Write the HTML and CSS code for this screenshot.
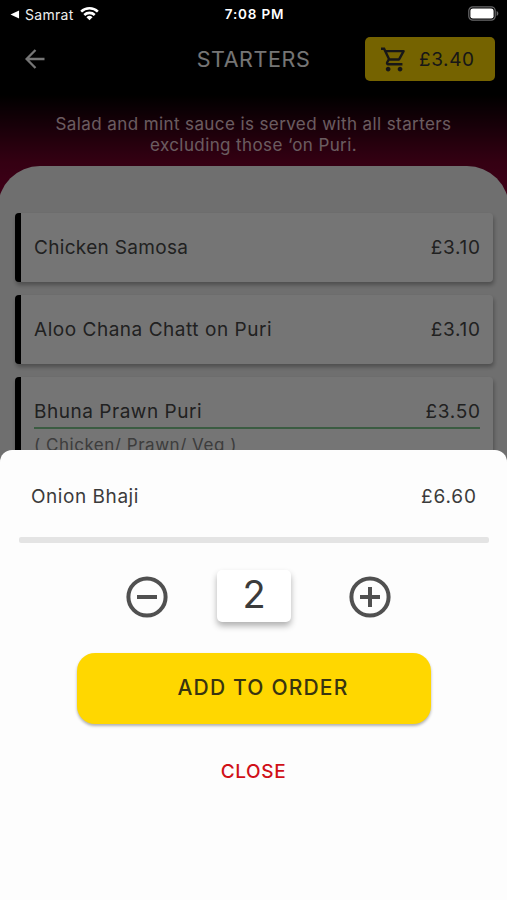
FILE: index.html
```html
<!DOCTYPE html>
<html lang="en">
<head>
<meta charset="utf-8">
<title>Starters</title>
<link rel="stylesheet" href="styles.css">
</head>
<body>
<div class="phone">
  <div class="status">
    <div class="status-left">
      <svg class="back-app" viewBox="0 0 10 10"><path d="M0 5 9.5.5v9z" fill="#fff"/></svg>
      <span class="app-name">Samrat</span>
      <svg class="wifi" viewBox="0 0 20 15" fill="none" stroke="#fff" stroke-width="2.7"><path d="M1.2 5.6a12.6 12.6 0 0 1 17.6 0M4.5 9.1a7.9 7.9 0 0 1 11 0"/><path d="M10 14.6 6.8 11.4a4.6 4.6 0 0 1 6.4 0z" fill="#fff" stroke="none"/></svg>
    </div>
    <span class="time">7:08 PM</span>
    <svg class="battery" viewBox="0 0 31 15"><rect x=".8" y=".8" width="26.4" height="13.4" rx="4" fill="none" stroke="#69696b" stroke-width="1.2"/><rect x="2.4" y="2.4" width="23.2" height="10.2" rx="2.4" fill="#fff"/><path d="M28.6 5c2.3.8 2.3 4.2 0 5z" fill="#69696b"/></svg>
  </div>

  <div class="screen">
    <header class="header">
      <svg class="back" viewBox="0 0 20 20" fill="none" stroke="#fff" stroke-width="2.3"><path d="M19.5 10H2M10.5 1 1.6 10l8.9 9"/></svg>
      <h1 class="title">STARTERS</h1>
      <div class="cart">
        <svg class="cart-icon" viewBox="1 2 21 20" fill="#333"><path d="M15.55 13c.75 0 1.41-.41 1.75-1.03l3.58-6.49A.996.996 0 0 0 20.01 4H5.21l-.94-2H1v2h2l3.6 7.59-1.35 2.44C4.52 15.37 5.48 17 7 17h12v-2H7l1.1-2h7.45zM6.16 6h12.15l-2.76 5H8.53L6.16 6zM7 18c-1.1 0-1.99.9-1.99 2S5.9 22 7 22s2-.9 2-2-.9-2-2-2zm10 0c-1.1 0-1.99.9-1.99 2s.89 2 1.99 2 2-.9 2-2-.9-2-2-2z"/></svg>
        <span class="cart-total">£3.40</span>
      </div>
    </header>
    <p class="note">Salad and mint sauce is served with all starters<br>excluding those ‘on Puri.</p>
    <main class="panel">
      <article class="item"><span class="name samosa">Chicken Samosa</span><span class="price">£3.10</span></article>
      <article class="item"><span class="name">Aloo Chana Chatt on Puri</span><span class="price">£3.10</span></article>
      <article class="item tall">
        <div class="item-row"><span class="name">Bhuna Prawn Puri</span><span class="price">£3.50</span></div>
        <div class="options">( Chicken/ Prawn/ Veg )</div>
      </article>
    </main>
    <div class="scrim"></div>
  </div>

  <section class="sheet">
    <div class="sheet-row"><span class="sheet-name">Onion Bhaji</span><span class="sheet-price">£6.60</span></div>
    <div class="divider"></div>
    <div class="stepper">
      <svg class="round" viewBox="0 0 42 42" fill="none" stroke="#505050" stroke-width="4"><circle cx="21" cy="21" r="18.6"/><path d="M11 21h20"/></svg>
      <div class="qty">2</div>
      <svg class="round" viewBox="0 0 42 42" fill="none" stroke="#505050" stroke-width="4"><circle cx="21" cy="21" r="18.6"/><path d="M11 21h20M21 11v20"/></svg>
    </div>
    <button class="add">ADD TO ORDER</button>
    <button class="close">CLOSE</button>
  </section>
</div>
</body>
</html>
```
FILE: styles.css
```css
* { box-sizing: border-box; }
body { margin: 0; background: #000; font-family: Inter, "Liberation Sans", sans-serif; }
.phone { position: relative; width: 507px; height: 900px; overflow: hidden; display: flex; flex-direction: column; }

.status { height: 28px; flex: none; display: grid; grid-template-columns: 1fr auto 1fr; align-items: center; padding: 0 8px 0 10px; background: #000; color: #fff; }
.status-left { display: flex; align-items: center; }
.back-app { width: 10px; height: 9px; }
.app-name { margin-left: 5px; font-size: 14px; letter-spacing: .3px; color: #eee; }
.wifi { width: 19px; height: 15px; margin-left: 6px; margin-top: -2px; }
.time { font-size: 13.5px; font-weight: 600; letter-spacing: .8px; }
.battery { width: 31px; height: 15px; justify-self: end; margin-top: -2px; }

.screen { position: relative; flex: 1; display: flex; flex-direction: column; background: linear-gradient(#000 66px, #300012 95px, #720029 134px, #8a0034 165px); }
.header { height: 62px; flex: none; display: grid; grid-template-columns: 1fr auto 1fr; align-items: center; padding: 0 12px 0 25px; }
.back { width: 20px; height: 20px; }
.title { margin: 0 13px 0 0; color: #fff; font-size: 21.5px; font-weight: 400; letter-spacing: .6px; }
.cart { justify-self: end; width: 130px; height: 44px; border-radius: 5px; background: #ffd700; display: flex; align-items: center; padding-left: 16px; color: #333; }
.cart-icon { width: 25px; height: 25px; }
.cart-total { margin-left: 13px; font-size: 19px; letter-spacing: .6px; }
.note { margin: 24px 0 0; height: 52px; flex: none; text-align: center; font-size: 17px; line-height: 21px; letter-spacing: .4px; color: #e8c9d2; }
.panel { flex: 1; margin: 0 -2px; padding: 47px 16px 0 17px; border-radius: 42px 42px 0 0; background: #f2f2f2; display: flex; flex-direction: column; gap: 13px; }
.item { height: 69px; flex: none; display: flex; align-items: center; justify-content: space-between; padding: 0 13px; border-left: 6px solid #000; border-radius: 4px; background: #fff; box-shadow: 1px 3px 4px rgba(0,0,0,.3); color: #484848; font-size: 19px; }
.tall { height: 120px; flex-direction: column; align-items: stretch; justify-content: flex-start; padding-top: 17px; }
.item-row { display: flex; justify-content: space-between; align-items: center; height: 35px; border-bottom: 2px solid #82c990; padding-top: 1px; }
.name { letter-spacing: .53px; }
.samosa { letter-spacing: .32px; }
.price { letter-spacing: .7px; margin-right: -.7px; }
.options { margin-top: 4px; font-size: 17px; line-height: 24px; letter-spacing: .52px; color: #858585; }
.scrim { position: absolute; inset: 0; background: rgba(0,0,0,.54); }

.sheet { position: absolute; left: 0; right: 0; top: 450px; bottom: 0; border-radius: 12px 12px 0 0; background: #fdfdfd; display: flex; flex-direction: column; align-items: center; color: #3b3b3b; }
.sheet-row { width: 100%; height: 87px; display: flex; justify-content: space-between; align-items: center; padding: 5px 31px 0; font-size: 19px; }
.sheet-name { letter-spacing: .55px; }
.sheet-price { letter-spacing: .9px; margin-right: -.9px; }
.divider { width: 470px; height: 6px; border-radius: 2px; background: #e4e4e4; }
.stepper { display: flex; align-items: center; justify-content: center; gap: 49px; margin-top: 27px; height: 54px; padding-left: 10px; }
.round { width: 42px; height: 42px; }
.qty { width: 74px; height: 52px; margin: -2px 9px 0 0; border-radius: 5px; background: #fff; box-shadow: 0 4px 6px rgba(0,0,0,.3); display: flex; align-items: center; justify-content: center; font-size: 38px; line-height: 48px; padding-bottom: 4px; }
button { border: 0; font-family: inherit; padding: 0; }
.add { width: 354px; height: 71px; margin-top: 29px; border-radius: 18px; background: #ffd700; box-shadow: 0 2px 3px rgba(0,0,0,.3); color: #383410; font-size: 21px; font-weight: 500; letter-spacing: 1.2px; padding-left: 19px; padding-bottom: 2px; }
.close { margin-top: 32px; height: 30px; background: none; color: #d01018; font-size: 19px; font-weight: 500; letter-spacing: .6px; }
```
